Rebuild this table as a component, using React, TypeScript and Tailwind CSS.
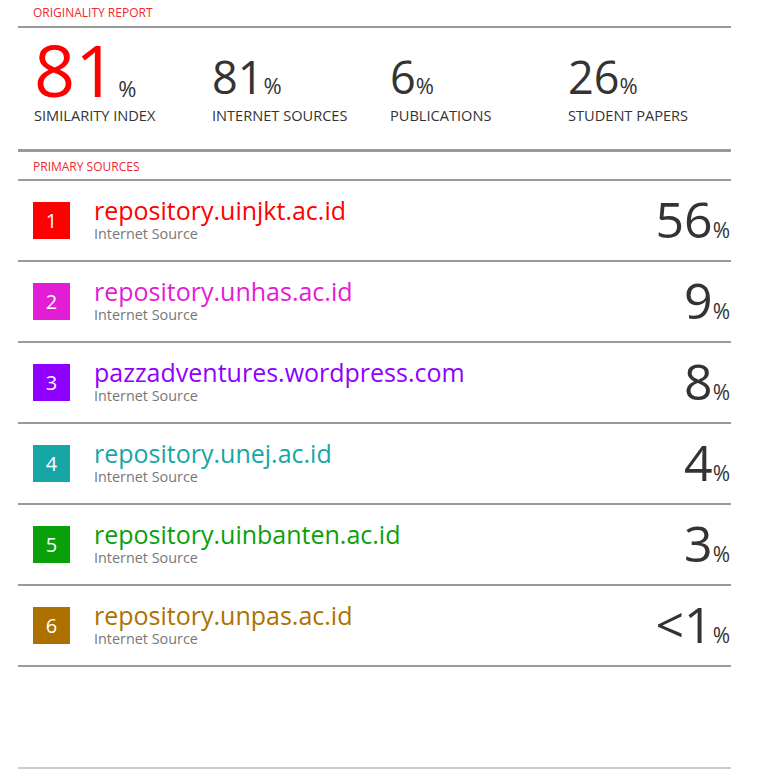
import React from "react";

const sources = [
  { n: "1", name: "repository.uinjkt.ac.id", pct: "56", bg: "bg-[#ff0000]", fg: "text-[#ff0000]" },
  { n: "2", name: "repository.unhas.ac.id", pct: "9", bg: "bg-[#e31cd6]", fg: "text-[#e31cd6]" },
  { n: "3", name: "pazzadventures.wordpress.com", pct: "8", bg: "bg-[#8f00ff]", fg: "text-[#8f00ff]" },
  { n: "4", name: "repository.unej.ac.id", pct: "4", bg: "bg-[#17a6a6]", fg: "text-[#17a6a6]" },
  { n: "5", name: "repository.uinbanten.ac.id", pct: "3", bg: "bg-[#0aa00a]", fg: "text-[#0aa00a]" },
  { n: "6", name: "repository.unpas.ac.id", pct: "<1", bg: "bg-[#ad7100]", fg: "text-[#ad7100]" },
];

const stats = [
  { v: "81", l: "INTERNET SOURCES" },
  { v: "6", l: "PUBLICATIONS" },
  { v: "26", l: "STUDENT PAPERS" },
];

export default function App() {
  return (
    <div className="w-[782px] h-[782px] bg-white text-[#333] font-['Open_Sans',sans-serif] pl-[18px]">
      <div className="w-[713px]">
        <div className="h-[26px] pl-[15px] pt-[4px] text-[12px] leading-[17px] text-[#f0282d]">ORIGINALITY REPORT</div>
        <div className="h-[2px] bg-[#9a9a9a]" />
        <div className="h-[121px] pl-[16px] flex items-start pt-[5px]">
          <div className="w-[178px] shrink-0 flex flex-col">
            <div className="flex items-baseline">
              <span className="text-[72px] leading-[72px] text-[#ff0000]">81</span>
              <span className="text-[22px] leading-[22px] ml-[2px]">%</span>
            </div>
            <div className="text-[14.6px] leading-[18px] mt-[1px] whitespace-nowrap">SIMILARITY INDEX</div>
          </div>
          {stats.map((s) => (
            <div key={s.l} className="w-[178px] shrink-0 flex flex-col">
              <div className="flex items-baseline h-[72px] pt-[16px]">
                <span className="text-[45px] leading-[56px]">{s.v}</span>
                <span className="text-[22px] leading-[22px]">%</span>
              </div>
              <div className="text-[14.6px] leading-[18px] mt-[1px] whitespace-nowrap">{s.l}</div>
            </div>
          ))}
        </div>
        <div className="h-[3px] bg-[#9a9a9a]" />
        <div className="h-[27px] pl-[15px] pt-[6px] text-[12px] leading-[17px] text-[#f0282d]">PRIMARY SOURCES</div>
        <div className="h-[2px] bg-[#9a9a9a]" />
        {sources.map((s) => (
          <div key={s.n} className="h-[81px] border-b-2 border-[#9a9a9a] flex items-center pl-[15px]">
            <div className={`w-[37px] h-[37px] shrink-0 ${s.bg} flex items-center justify-center text-white text-[20px] leading-none`}>{s.n}</div>
            <div className="ml-[24px] flex flex-col flex-1">
              <div className={`text-[25px] leading-[26px] ${s.fg}`}>{s.name}</div>
              <div className="text-[14.4px] leading-[20px] mt-[1px] text-[#777]">Internet Source</div>
            </div>
            <div className="flex items-baseline pr-[1px] mb-[3px]">
              <span className="text-[50px] leading-[48px]">{s.pct}</span>
              <span className="text-[21px] leading-[18px]">%</span>
            </div>
          </div>
        ))}
        <div className="h-[100px]" />
        <div className="h-[2px] bg-[#cccccc]" />
      </div>
    </div>
  );
}
